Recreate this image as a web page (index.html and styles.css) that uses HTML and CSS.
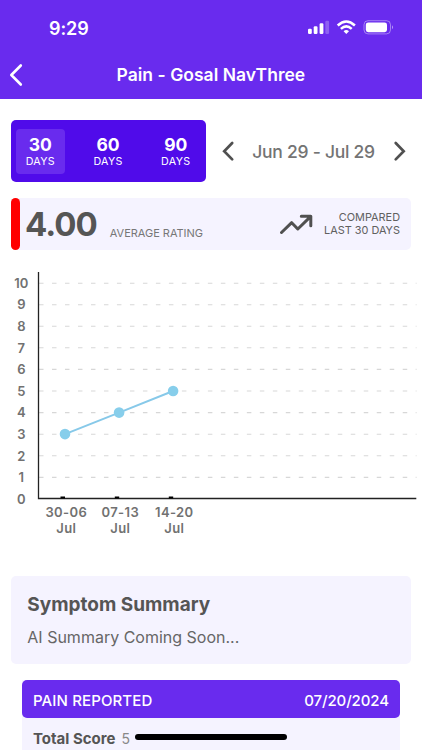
FILE: index.html
```html
<!DOCTYPE html>
<html lang="en">
<head>
<meta charset="utf-8">
<title>Pain - Gosal NavThree</title>
<link rel="stylesheet" href="styles.css">
</head>
<body>
<header class="header">
  <div class="status">
    <span class="clock">9:29</span>
    <svg class="status-icons" width="88" height="18" viewBox="0 0 88 18" fill="#fff">
      <rect x="1" y="9.7" width="3.8" height="5.3" rx="1.2"/>
      <rect x="6.7" y="7.2" width="3.8" height="7.8" rx="1.2"/>
      <rect x="12.6" y="4.2" width="3.8" height="10.8" rx="1.2"/>
      <rect x="18.3" y="1.7" width="3.8" height="13.3" rx="1.2" opacity=".25"/>
      <g fill="none" stroke="#fff" stroke-width="2.5">
        <path d="M30.7 6.5Q39.3-1.6 47.9 6.5"/>
        <path d="M33.9 9.9Q39.3 4.9 44.7 9.9"/>
      </g>
      <path d="M36.6 12.2Q39.3 10 42 12.2L39.3 15Z"/>
      <rect x="57" y="1.7" width="26.5" height="13.2" rx="4" fill="none" stroke="#fff" opacity=".4"/>
      <rect x="58.8" y="3.4" width="21.2" height="9.8" rx="2.4"/>
      <path d="M85 6.3Q87.2 8.3 85 10.3Z" opacity=".5"/>
    </svg>
  </div>
  <div class="nav">
    <svg class="back" width="16" height="24" viewBox="0 0 16 24"><path d="M12.8 2.5L3.3 12L12.8 21.5"/></svg>
    <h1 class="title">Pain - Gosal NavThree</h1>
  </div>
</header>

<main>
  <section class="controls">
    <div class="tabs">
      <div class="tab active"><b>30</b><span>DAYS</span></div>
      <div class="tab"><b>60</b><span>DAYS</span></div>
      <div class="tab"><b>90</b><span>DAYS</span></div>
    </div>
    <div class="range">
      <svg class="arrow" width="16" height="22" viewBox="0 0 16 22"><path d="M12.2 3L4.2 11.2L12.2 19.4"/></svg>
      <span class="range-text">Jun 29 - Jul 29</span>
      <svg class="arrow" width="16" height="22" viewBox="0 0 16 22"><path d="M3.7 3L11.7 11.2L3.7 19.4"/></svg>
    </div>
  </section>

  <section class="rating">
    <div class="marker"></div>
    <span class="score">4.00</span>
    <span class="score-label">AVERAGE RATING</span>
    <svg class="trend" width="36" height="24" viewBox="0 0 36 24"><path d="M2.5 20.5L12.7 10.7L18.8 17L31 5.2M22.3 4.3H31.8V13.8"/></svg>
    <span class="compared">COMPARED<br>LAST 30 DAYS</span>
  </section>

  <svg class="chart" width="422" height="290" viewBox="0 260 422 290">
    <g class="grid">
      <path d="M39 283.2H416.5M39 304.7H416.5M39 326.2H416.5M39 347.8H416.5M39 369.4H416.5M39 391H416.5M39 412.6H416.5M39 434.2H416.5M39 455.8H416.5M39 477.4H416.5"/>
    </g>
    <path class="axis" d="M38.5 272V498.5H416.3"/>
    <path class="ticks" d="M60.5 497.5H65M114.8 497.5H119.2M168.8 497.5H173.2"/>
    <path class="line" d="M65 434.1L119.1 412.6L173.1 391"/>
    <g class="dots"><circle cx="65" cy="434.1" r="5.3"/><circle cx="119.1" cy="412.6" r="5.3"/><circle cx="173.1" cy="391" r="5.3"/></g>
    <g class="labels">
      <text x="21.3" y="287.8">10</text>
      <text x="21.3" y="309.3">9</text>
      <text x="21.3" y="331">8</text>
      <text x="21.3" y="352.6">7</text>
      <text x="21.3" y="374.2">6</text>
      <text x="21.3" y="395.8">5</text>
      <text x="21.3" y="417.4">4</text>
      <text x="21.3" y="439">3</text>
      <text x="21.3" y="460.6">2</text>
      <text x="21.3" y="482.2">1</text>
      <text x="21.3" y="503.8">0</text>
    </g>
    <g class="labels dates">
      <text x="66.3" y="517.3">30-06</text><text x="66.3" y="532.8">Jul</text>
      <text x="120.3" y="517.3">07-13</text><text x="120.3" y="532.8">Jul</text>
      <text x="174.3" y="517.3">14-20</text><text x="174.3" y="532.8">Jul</text>
    </g>
  </svg>

  <section class="summary">
    <h2>Symptom Summary</h2>
    <p>AI Summary Coming Soon...</p>
  </section>

  <section class="report">
    <div class="report-head"><span class="report-title">PAIN REPORTED</span><span class="report-date">07/20/2024</span></div>
    <div class="report-row"><b>Total Score</b><span>5</span></div>
  </section>
</main>
<div class="home-bar"></div>
</body>
</html>
```
FILE: styles.css
```css
* { box-sizing: border-box; }
body {
  margin: 0;
  height: 750px;
  overflow: hidden;
  background: #fff;
  color: #555;
  font-family: Inter, "Liberation Sans", sans-serif;
}
svg { display: block; flex: none; }
span, b, h1 { white-space: nowrap; }

.header { height: 98.5px; background: #692bee; color: #fff; }
.status { display: flex; justify-content: space-between; align-items: center; height: 56px; padding: 0 27px 0 49px; }
.clock { font-size: 18px; font-weight: 600; letter-spacing: -.1px; }
.nav { display: flex; align-items: center; height: 37px; padding: 0 100px 0 8px; }
.back { fill: none; stroke: #fff; stroke-width: 2.6; stroke-linecap: round; stroke-linejoin: round; }
.title { margin: 0 0 0 92.5px; font-size: 17.5px; font-weight: 600; letter-spacing: .03px; }

.controls { display: flex; align-items: center; padding: 21.5px 14.5px 0 11px; }
.tabs { display: flex; gap: 19px; width: 194.5px; height: 62px; padding: 9px 5px; border-radius: 5px; background: #500bea; color: #fff; }
.tab { display: flex; flex-direction: column; align-items: center; width: 48.7px; height: 44.5px; padding-top: 6px; border-radius: 4px; }
.tab.active { background: #692bee; }
.tab b { font-size: 17.5px; line-height: 20px; font-weight: 700; }
.tab span { font-size: 10.7px; line-height: 14px; letter-spacing: .3px; }
.range { display: flex; flex: 1; justify-content: space-between; align-items: center; margin-left: 14px; }
.range-text { font-size: 17.5px; font-weight: 500; letter-spacing: -.25px; color: #747474; }
.arrow { fill: none; stroke: #505050; stroke-width: 2.7; stroke-linecap: round; }

.rating { display: flex; align-items: center; height: 52px; margin: 16px 11px 0; padding-right: 11px; border-radius: 5px; background: #f5f3ff; }
.marker { width: 9px; height: 52px; border-radius: 4.5px; background: #f00; }
.score { margin: 0 0 0 5px; font-size: 33px; font-weight: 700; letter-spacing: -1px; }
.score-label { margin: 18px 0 0 13px; font-size: 11px; letter-spacing: -.02px; color: #777; }
.trend { margin-left: auto; fill: none; stroke: #505050; stroke-width: 3; stroke-linecap: round; stroke-linejoin: round; }
.compared { margin-left: 9px; font-size: 10.9px; line-height: 13px; text-align: right; color: #606060; }

.chart { margin-top: 9.5px; }
.grid { stroke: #d7d7d7; stroke-width: 1.1; stroke-dasharray: 4.5 8.49; }
.axis { fill: none; stroke: #222; stroke-width: 1.3; }
.ticks { stroke: #000; stroke-width: 2; }
.line { fill: none; stroke: #87c9e9; stroke-width: 2; }
.dots { fill: #87ceeb; }
.labels { fill: #717171; font-size: 13px; font-weight: 600; text-anchor: middle; }
.dates { letter-spacing: .4px; }

.summary { height: 88.5px; margin: 26px 11px 0; padding: 17px 16.3px; border-radius: 5px; background: #f5f3ff; }
.summary h2 { margin: 0; font-size: 19px; line-height: 23px; font-weight: 700; }
.summary p { margin: 11px 0 0; font-size: 16px; line-height: 20px; color: #666; }

.report { margin: 16px 22px 0; background: #f5f3ff; }
.report-head { display: flex; justify-content: space-between; align-items: center; height: 38px; padding: 2px 11px 0; border-radius: 5px; background: #692bee; color: #fff; font-size: 15px; font-weight: 500; }
.report-title { letter-spacing: .12px; }
.report-date { letter-spacing: -.1px; }
.report-row { display: flex; align-items: center; gap: 6px; height: 40px; padding: 0 11px; }
.report-row b { font-size: 15px; font-weight: 700; }
.report-row span { font-size: 14px; color: #888; }
.home-bar { position: absolute; left: 135px; top: 734.3px; width: 151.5px; height: 5.5px; border-radius: 3px; background: #000; }
```
